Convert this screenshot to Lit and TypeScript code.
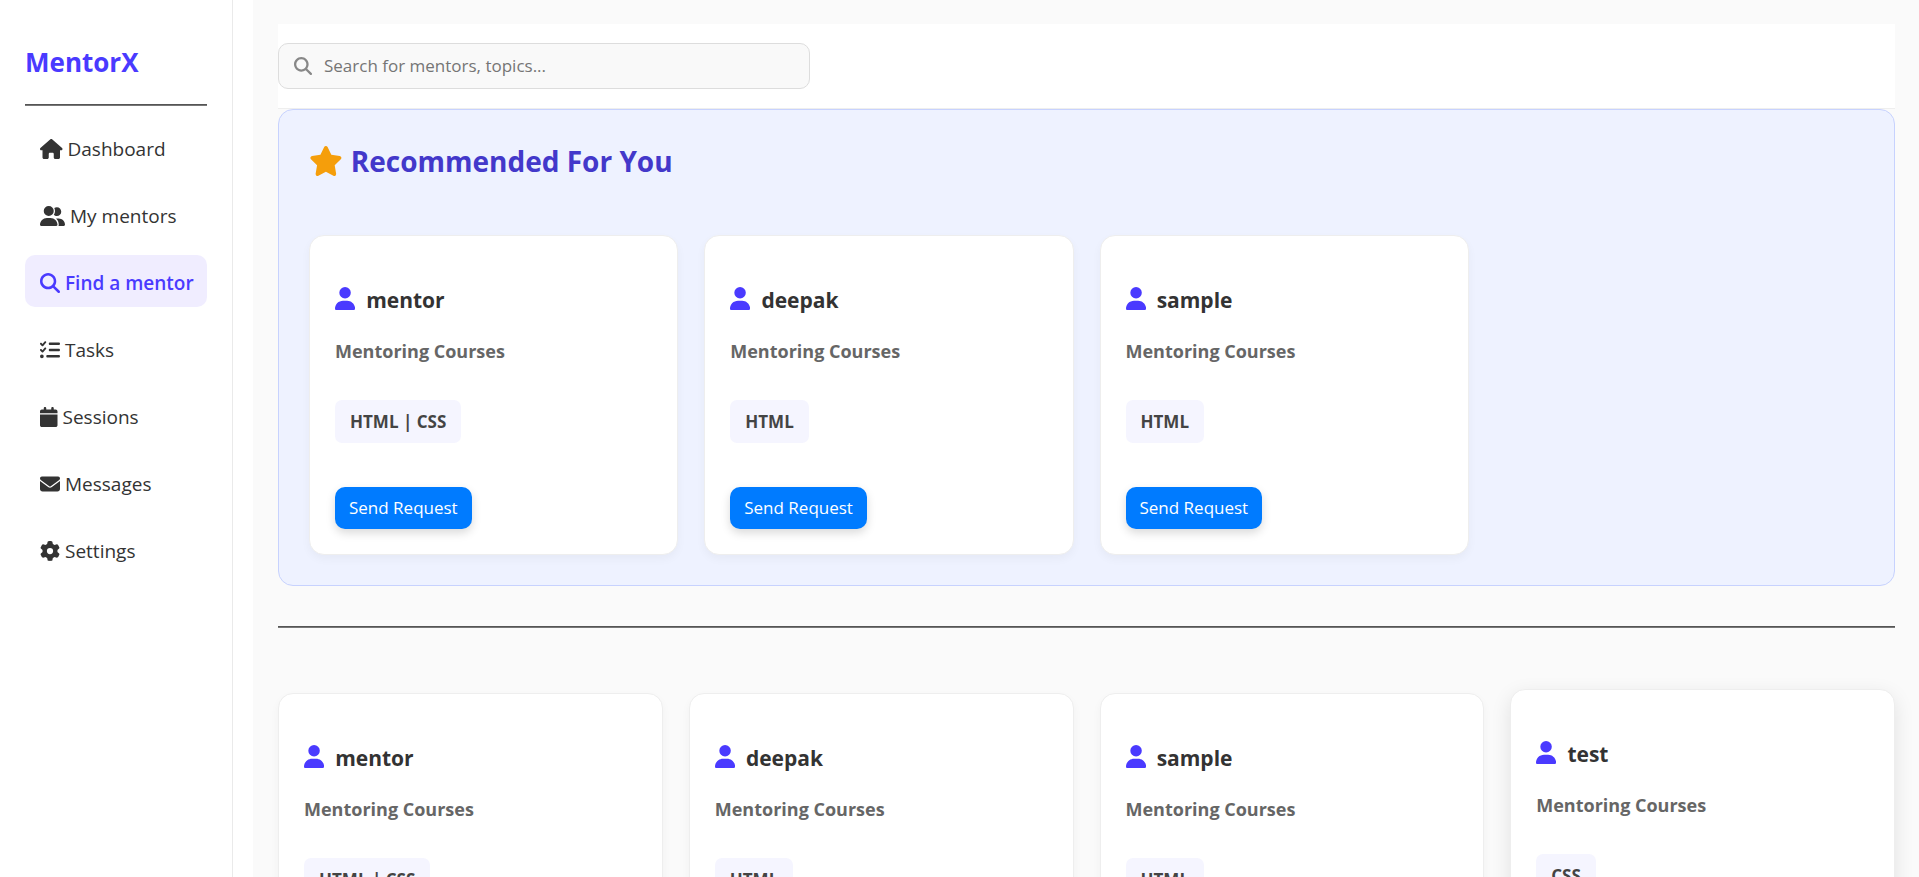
import { LitElement, html, css, svg } from "lit";
import { customElement, property } from "lit/decorators.js";
import { classMap } from "lit/directives/class-map.js";

type IconName =
  | "house" | "users" | "search" | "tasks" | "calendar" | "envelope" | "gear" | "star" | "user";

const ICONS: Record<IconName, { w: number; d: string }> = {
  house: {
    w: 576,
    d: "M575.8 255.5c0 18-15 32.1-32 32.1h-32l.7 160.2c0 2.7-.2 5.4-.5 8.1V472c0 22.1-17.9 40-40 40H456c-1.1 0-2.2 0-3.3-.1c-1.4 .1-2.8 .1-4.2 .1H416 392c-22.1 0-40-17.9-40-40V448 384c0-17.7-14.3-32-32-32H256c-17.7 0-32 14.3-32 32v64 24c0 22.1-17.9 40-40 40H160 128.1c-1.5 0-3-.1-4.5-.2c-1.2 .1-2.4 .2-3.6 .2H104c-22.1 0-40-17.9-40-40V360c0-.9 0-1.9 .1-2.8V287.6H32c-18 0-32-14-32-32.1c0-9 3-17 10-24L266.4 8c7-7 15-8 22-8s15 2 21 7L564.8 231.5c8 7 12 15 11 24z",
  },
  users: {
    w: 640,
    d: "M96 128a128 128 0 1 1 256 0A128 128 0 1 1 96 128zM0 482.3C0 383.8 79.8 304 178.3 304h91.4C368.2 304 448 383.8 448 482.3c0 16.4-13.3 29.7-29.7 29.7H29.7C13.3 512 0 498.7 0 482.3zM609.3 512H471.4c5.4-9.4 8.6-20.3 8.6-32v-8c0-60.7-27.1-115.2-69.8-151.8c2.4-.1 4.7-.2 7.1-.2h61.4C567.8 320 640 392.2 640 481.3c0 17-13.8 30.7-30.7 30.7zM432 256c-31 0-59-12.6-79.3-32.9C372.4 196.5 384 163.6 384 128c0-26.8-6.6-52.1-18.3-74.3C384.3 40.1 407.2 32 432 32c61.9 0 112 50.1 112 112s-50.1 112-112 112z",
  },
  search: {
    w: 512,
    d: "M416 208c0 45.9-14.9 88.3-40 122.7L502.6 457.4c12.5 12.5 12.5 32.8 0 45.3s-32.8 12.5-45.3 0L330.7 376c-34.4 25.2-76.8 40-122.7 40C93.1 416 0 322.9 0 208S93.1 0 208 0S416 93.1 416 208zM208 352a144 144 0 1 0 0-288 144 144 0 1 0 0 288z",
  },
  tasks: {
    w: 512,
    d: "M152.1 38.2c9.9 8.9 10.7 24 1.8 33.9l-72 80c-4.4 4.9-10.6 7.8-17.2 7.9s-12.9-2.4-17.6-7L7 113C-2.3 103.6-2.3 88.4 7 79s24.6-9.4 33.9 0l22.1 22.1 55.1-61.2c8.9-9.9 24-10.7 33.9-1.8zm0 160c9.9 8.9 10.7 24 1.8 33.9l-72 80c-4.4 4.9-10.6 7.8-17.2 7.9s-12.9-2.4-17.6-7L7 273c-9.4-9.4-9.4-24.6 0-33.9s24.6-9.4 33.9 0l22.1 22.1 55.1-61.2c8.9-9.9 24-10.7 33.9-1.8zM224 96c0-17.7 14.3-32 32-32H480c17.7 0 32 14.3 32 32s-14.3 32-32 32H256c-17.7 0-32-14.3-32-32zm0 160c0-17.7 14.3-32 32-32H480c17.7 0 32 14.3 32 32s-14.3 32-32 32H256c-17.7 0-32-14.3-32-32zM160 416c0-17.7 14.3-32 32-32H480c17.7 0 32 14.3 32 32s-14.3 32-32 32H192c-17.7 0-32-14.3-32-32zM48 368a48 48 0 1 1 0 96 48 48 0 1 1 0-96z",
  },
  calendar: {
    w: 448,
    d: "M96 32V64H48C21.5 64 0 85.5 0 112v48H448V112c0-26.5-21.5-48-48-48H352V32c0-17.7-14.3-32-32-32s-32 14.3-32 32V64H160V32c0-17.7-14.3-32-32-32S96 14.3 96 32zM448 192H0V464c0 26.5 21.5 48 48 48H400c26.5 0 48-21.5 48-48V192z",
  },
  envelope: {
    w: 512,
    d: "M48 64C21.5 64 0 85.5 0 112c0 15.1 7.1 29.3 19.2 38.4L236.8 313.6c11.4 8.5 27 8.5 38.4 0L492.8 150.4c12.1-9.1 19.2-23.3 19.2-38.4c0-26.5-21.5-48-48-48H48zM0 176V384c0 35.3 28.7 64 64 64H448c35.3 0 64-28.7 64-64V176L294.4 339.2c-22.8 17.1-54 17.1-76.8 0L0 176z",
  },
  gear: {
    w: 512,
    d: "M495.9 166.6c3.2 8.7 .5 18.4-6.4 24.6l-43.3 39.4c1.1 8.3 1.7 16.8 1.7 25.4s-.6 17.1-1.7 25.4l43.3 39.4c6.9 6.2 9.6 15.9 6.4 24.6c-4.4 11.9-9.7 23.3-15.8 34.3l-4.7 8.1c-6.6 11-14 21.4-22.1 31.2c-5.9 7.2-15.7 9.6-24.5 6.8l-55.7-17.7c-13.4 10.3-28.2 18.9-44 25.4l-12.5 57.1c-2 9.1-9 16.3-18.2 17.8c-13.8 2.3-28 3.5-42.5 3.5s-28.7-1.2-42.5-3.5c-9.2-1.5-16.2-8.7-18.2-17.8l-12.5-57.1c-15.8-6.5-30.6-15.1-44-25.4L83.1 425.9c-8.8 2.8-18.6 .3-24.5-6.8c-8.1-9.8-15.5-20.2-22.1-31.2l-4.7-8.1c-6.1-11-11.4-22.4-15.8-34.3c-3.2-8.7-.5-18.4 6.4-24.6l43.3-39.4C64.6 273.1 64 264.6 64 256s.6-17.1 1.7-25.4L22.4 191.2c-6.9-6.2-9.6-15.9-6.4-24.6c4.4-11.9 9.7-23.3 15.8-34.3l4.7-8.1c6.6-11 14-21.4 22.1-31.2c5.9-7.2 15.7-9.6 24.5-6.8l55.7 17.7c13.4-10.3 28.2-18.9 44-25.4l12.5-57.1c2-9.1 9-16.3 18.2-17.8C227.3 1.2 241.5 0 256 0s28.7 1.2 42.5 3.5c9.2 1.5 16.2 8.7 18.2 17.8l12.5 57.1c15.8 6.5 30.6 15.1 44 25.4l55.7-17.7c8.8-2.8 18.6-.3 24.5 6.8c8.1 9.8 15.5 20.2 22.1 31.2l4.7 8.1c6.1 11 11.4 22.4 15.8 34.3zM256 336a80 80 0 1 0 0-160 80 80 0 1 0 0 160z",
  },
  star: {
    w: 576,
    d: "M316.9 18C311.6 7 300.4 0 288.1 0s-23.4 7-28.8 18L195 150.3 51.4 171.5c-12 1.8-22 10.2-25.7 21.7s-.7 24.2 7.9 32.7L137.8 329 113.2 474.7c-2 12 3 24.2 12.9 31.3s23 8 33.8 2.3l128.3-68.5 128.3 68.5c10.8 5.7 23.9 4.9 33.8-2.3s14.9-19.3 12.9-31.3L438.5 329 542.7 225.9c8.6-8.5 11.7-21.2 7.9-32.7s-13.7-19.9-25.7-21.7L381.2 150.3 316.9 18z",
  },
  user: {
    w: 448,
    d: "M224 256A128 128 0 1 0 224 0a128 128 0 1 0 0 256zm-45.7 48C79.8 304 0 383.8 0 482.3C0 498.7 13.3 512 29.7 512H418.3c16.4 0 29.7-13.3 29.7-29.7C448 383.8 368.2 304 269.7 304H178.3z",
  },
};

const icon = (name: IconName) => html`<svg
  class="icon"
  viewBox="0 0 ${ICONS[name].w} 512"
  aria-hidden="true"
>${svg`<path d=${ICONS[name].d}></path>`}</svg>`;

const iconStyles = css`
  .icon {
    display: block;
    flex: none;
    height: 20px;
    fill: currentColor;
  }
`;

@customElement("side-bar")
class SideBar extends LitElement {
  static styles = [
    iconStyles,
    css`
      :host {
        display: block;
        box-sizing: border-box;
        flex: none;
        width: 233px;
        margin-right: 20px;
        padding: 44px 25px;
        border-right: 1px solid #eaeaea;
      }
      .brand {
        margin: 0;
        font-size: 26px;
        line-height: 36px;
        font-weight: 700;
        color: #4a3aff;
      }
      .rule {
        margin: 24px 0 15px;
        border: 0;
        border-top: 1px solid #555;
        border-bottom: 1px solid #777;
      }
      .list {
        display: flex;
        flex-direction: column;
        gap: 15px;
        margin: 0;
        padding: 0;
        list-style: none;
      }
      .link {
        display: flex;
        align-items: center;
        gap: 5px;
        padding: 14px 15px 10px;
        border-radius: 10px;
        color: #333;
        font-size: 19px;
        line-height: 28px;
        white-space: nowrap;
        text-decoration: none;
      }
      .active {
        background: #f0edff;
        color: #4a3aff;
        font-weight: 600;
      }
    `,
  ];

  private items: { icon: IconName; label: string; active?: boolean }[] = [
    { icon: "house", label: "Dashboard" },
    { icon: "users", label: "My mentors" },
    { icon: "search", label: "Find a mentor", active: true },
    { icon: "tasks", label: "Tasks" },
    { icon: "calendar", label: "Sessions" },
    { icon: "envelope", label: "Messages" },
    { icon: "gear", label: "Settings" },
  ];

  render() {
    return html`
      <h1 class="brand">MentorX</h1>
      <hr class="rule" />
      <nav>
        <ul class="list">
          ${this.items.map(
            (item) => html`<li>
              <a class=${classMap({ link: true, active: !!item.active })} href="#">
                ${icon(item.icon)}<span>${item.label}</span>
              </a>
            </li>`,
          )}
        </ul>
      </nav>
    `;
  }
}

@customElement("mentor-card")
class MentorCard extends LitElement {
  @property() name = "";
  @property() courses = "";
  @property({ type: Boolean, reflect: true }) raised = false;

  static styles = [
    iconStyles,
    css`
      :host {
        display: flex;
        flex-direction: column;
        align-items: flex-start;
        padding: 50px 25px 25px;
        border: 1px solid #eee;
        border-radius: 15px;
        background: #fff;
        box-shadow: 0 4px 10px rgba(0, 0, 0, 0.04);
      }
      :host([raised]) {
        transform: translateY(-4px);
        box-shadow: 0 6px 20px rgba(0, 0, 0, 0.1);
      }
      .name {
        display: flex;
        align-items: center;
        gap: 11px;
        margin: 0 0 24px;
        font-size: 21px;
        line-height: 28px;
        font-weight: 700;
        color: #333;
      }
      .name .icon {
        height: 23px;
        padding-bottom: 3px;
        color: #4a3aff;
      }
      .subtitle {
        margin: 0 0 36px;
        font-size: 18px;
        line-height: 26px;
        font-weight: 700;
        color: #666;
      }
      .courses {
        margin: 0 0 44px;
        padding: 10px 15px;
        border-radius: 7px;
        background: #f5f5ff;
        font-size: 17px;
        line-height: 23px;
        font-weight: 700;
        color: #444;
      }
      .request {
        padding: 9px 14px;
        border: 0;
        border-radius: 10px;
        background: #007bff;
        box-shadow: 0 4px 10px rgba(0, 0, 0, 0.15);
        color: #fff;
        font-family: inherit;
        font-size: 17px;
        line-height: 24px;
        cursor: pointer;
      }
    `,
  ];

  render() {
    return html`
      <h3 class="name">${icon("user")}<span>${this.name}</span></h3>
      <p class="subtitle">Mentoring Courses</p>
      <p class="courses">${this.courses}</p>
      <button class="request" type="button">Send Request</button>
    `;
  }
}

@customElement("app-root")
class AppRoot extends LitElement {
  static styles = [
    iconStyles,
    css`
      :host {
        display: flex;
        height: 100vh;
        overflow: hidden;
        background: #fff;
        font-family: "Segoe UI", "Open Sans", "Noto Sans", sans-serif;
      }
      .main {
        box-sizing: border-box;
        flex: 1;
        min-width: 0;
        padding: 24px 24px 24px 25px;
        overflow-y: auto;
        scrollbar-width: none;
        background: #fafafa;
      }
      .header {
        padding: 19px 0;
        border-bottom: 1px solid #eee;
        background: #fff;
      }
      .search {
        display: flex;
        align-items: center;
        gap: 12px;
        box-sizing: border-box;
        max-width: 532px;
        height: 46px;
        padding: 0 15px;
        border: 1px solid #ddd;
        border-radius: 10px;
        background: #f9f9f9;
        color: #888;
      }
      .search .icon {
        height: 18px;
      }
      .field {
        flex: 1;
        min-width: 0;
        padding: 0;
        border: 0;
        outline: 0;
        background: none;
        color: #333;
        font-family: inherit;
        font-size: 17px;
        line-height: 24px;
      }
      .field::placeholder {
        color: #757575;
      }
      .recommended {
        padding: 30px;
        border: 1px solid #c7d2fe;
        border-radius: 15px;
        background: #eef2ff;
      }
      .title {
        display: flex;
        align-items: center;
        gap: 8px;
        margin: 0 0 53px;
        font-size: 28px;
        line-height: 42px;
        font-weight: 700;
        color: #4338ca;
      }
      .title .icon {
        height: 30px;
        color: #f59e0b;
      }
      .cards {
        display: grid;
        grid-template-columns: repeat(4, minmax(0, 1fr));
        gap: 26px;
      }
      .rule {
        margin: 40px 0 65px;
        border: 0;
        border-top: 1px solid #555;
        border-bottom: 1px solid #777;
      }
    `,
  ];

  private mentors = [
    { name: "mentor", courses: "HTML | CSS" },
    { name: "deepak", courses: "HTML" },
    { name: "sample", courses: "HTML" },
    { name: "test", courses: "CSS", raised: true },
  ];

  private card(m: { name: string; courses: string; raised?: boolean }) {
    return html`<mentor-card
      .name=${m.name}
      .courses=${m.courses}
      ?raised=${!!m.raised}
    ></mentor-card>`;
  }

  render() {
    return html`
      <side-bar></side-bar>
      <main class="main">
        <header class="header">
          <label class="search">
            ${icon("search")}
            <input
              class="field"
              type="text"
              aria-label="Search"
              placeholder="Search for mentors, topics..."
            />
          </label>
        </header>
        <section class="recommended">
          <h2 class="title">${icon("star")}<span>Recommended For You</span></h2>
          <div class="cards">${this.mentors.slice(0, 3).map((m) => this.card(m))}</div>
        </section>
        <hr class="rule" />
        <section class="cards">${this.mentors.map((m) => this.card(m))}</section>
      </main>
    `;
  }
}
